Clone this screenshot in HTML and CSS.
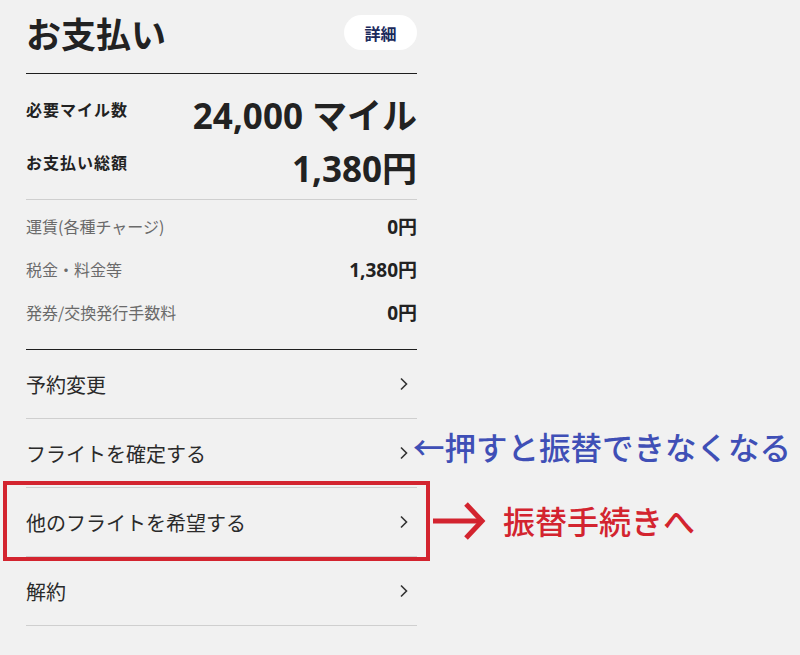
FILE: index.html
```html
<!DOCTYPE html>
<html lang="ja">
<head>
    <meta charset="UTF-8">
    <meta name="viewport" content="width=device-width, initial-scale=1.0">
    <title>お支払い</title>
    <link rel="stylesheet" href="styles.css">
</head>
<body>

    <div class="page">
        <div class="panel">
            <!-- Header -->
            <div class="header">
                <h1>お支払い</h1>
                <button class="detail-btn">詳細</button>
            </div>

            <!-- Totals -->
            <div class="summary">
                <div class="sum-row">
                    <span class="sum-label">必要マイル数</span>
                    <span class="sum-value">24,000 マイル</span>
                </div>
                <div class="sum-row">
                    <span class="sum-label">お支払い総額</span>
                    <span class="sum-value">1,380円</span>
                </div>
            </div>

            <!-- Breakdown -->
            <div class="breakdown">
                <div class="bd-row">
                    <span class="bd-label">運賃(各種チャージ)</span>
                    <span class="bd-value">0円</span>
                </div>
                <div class="bd-row">
                    <span class="bd-label">税金・料金等</span>
                    <span class="bd-value">1,380円</span>
                </div>
                <div class="bd-row">
                    <span class="bd-label">発券/交換発行手数料</span>
                    <span class="bd-value">0円</span>
                </div>
            </div>

            <!-- Menu -->
            <div class="menu">
                <a href="#" class="menu-item">
                    <span>予約変更</span>
                    <svg class="chev" width="8" height="14" viewBox="0 0 8 14"><path d="M1 1.5 L6.5 7 L1 12.5" fill="none" stroke="#333" stroke-width="1.6"/></svg>
                </a>
                <a href="#" class="menu-item">
                    <span>フライトを確定する</span>
                    <svg class="chev" width="8" height="14" viewBox="0 0 8 14"><path d="M1 1.5 L6.5 7 L1 12.5" fill="none" stroke="#333" stroke-width="1.6"/></svg>
                </a>
                <a href="#" class="menu-item">
                    <span>他のフライトを希望する</span>
                    <svg class="chev" width="8" height="14" viewBox="0 0 8 14"><path d="M1 1.5 L6.5 7 L1 12.5" fill="none" stroke="#333" stroke-width="1.6"/></svg>
                </a>
                <a href="#" class="menu-item">
                    <span>解約</span>
                    <svg class="chev" width="8" height="14" viewBox="0 0 8 14"><path d="M1 1.5 L6.5 7 L1 12.5" fill="none" stroke="#333" stroke-width="1.6"/></svg>
                </a>
            </div>
        </div>

        <!-- Annotations drawn over the screenshot -->
        <div class="note-blue">←押すと振替できなくなる</div>
        <div class="red-box"></div>
        <svg class="red-arrow" width="56" height="40" viewBox="0 0 56 40">
            <path d="M2 20 H50" stroke="#d3242f" stroke-width="5" fill="none"/>
            <path d="M35 3 L51 20 L35 37" stroke="#d3242f" stroke-width="5" fill="none" stroke-linejoin="miter"/>
        </svg>
        <div class="note-red">振替手続きへ</div>
    </div>

</body>
</html>
```

FILE: styles.css
```css
body {
    margin: 0;
    padding: 0;
    background: #f1f1f1;
    font-family: "Open Sans", "Noto Sans CJK JP", sans-serif;
    color: #222;
}

.page {
    position: relative;
    width: 800px;
    height: 655px;
    overflow: hidden;
}

/* Left payment panel */
.panel {
    width: 391px;
    margin-left: 26px;
}

.header {
    display: flex;
    justify-content: space-between;
    align-items: center;
    padding: 15px 0 23px;
    height: 35px;
    border-bottom: 1px solid #1e1e1e;
}

h1 {
    margin: 0;
    font-size: 35px;
    line-height: 35px;
    font-weight: 700;
    font-family: "Noto Sans CJK JP", sans-serif;
    color: #222;
}

.detail-btn {
    width: 73px;
    height: 35px;
    border: none;
    border-radius: 18px;
    background: #fff;
    color: #1b2a5c;
    font-family: "Noto Sans CJK JP", sans-serif;
    font-size: 16px;
    font-weight: 700;
    padding: 0;
}

.summary {
    display: flex;
    flex-direction: column;
    gap: 13px;
    padding: 22px 0 10px;
    border-bottom: 1px solid #cfcfcf;
}

.sum-row {
    display: flex;
    justify-content: space-between;
    align-items: flex-start;
    height: 40px;
}

.sum-label {
    margin-top: 3px;
    font-size: 16px;
    line-height: 20px;
    letter-spacing: 1px;
    font-weight: 700;
    font-family: "Noto Sans CJK JP", sans-serif;
}

.sum-value {
    font-size: 35px;
    line-height: 40px;
    font-weight: 700;
    color: #222;
}

.breakdown {
    padding: 4px 0 16px;
    border-bottom: 1px solid #1e1e1e;
}

.bd-row {
    display: flex;
    justify-content: space-between;
    align-items: center;
    height: 43px;
}

.bd-label {
    font-size: 16px;
    color: #6a6a6a;
    font-family: "Noto Sans CJK JP", sans-serif;
}

.bd-value {
    font-size: 19px;
    font-weight: 700;
    color: #222;
}

.menu-item {
    display: flex;
    justify-content: space-between;
    align-items: center;
    height: 68px;
    border-bottom: 1px solid #cfcfcf;
    text-decoration: none;
    color: #2a2a2a;
    font-size: 20px;
    font-family: "Noto Sans CJK JP", sans-serif;
}

.chev {
    margin-right: 9px;
}

/* Annotations */
.note-blue {
    position: absolute;
    left: 413px;
    top: 426px;
    font-size: 31.5px;
    line-height: 40px;
    font-weight: 500;
    color: #3f4fb6;
    font-family: "Noto Sans CJK JP", sans-serif;
}

.red-box {
    position: absolute;
    left: 3px;
    top: 481px;
    width: 419px;
    height: 72px;
    border: 4px solid #d3242f;
}

.red-arrow {
    position: absolute;
    left: 431px;
    top: 501px;
}

.note-red {
    position: absolute;
    left: 503px;
    top: 500px;
    font-size: 32px;
    line-height: 40px;
    font-weight: 500;
    color: #d3242f;
    font-family: "Noto Sans CJK JP", sans-serif;
}
```
